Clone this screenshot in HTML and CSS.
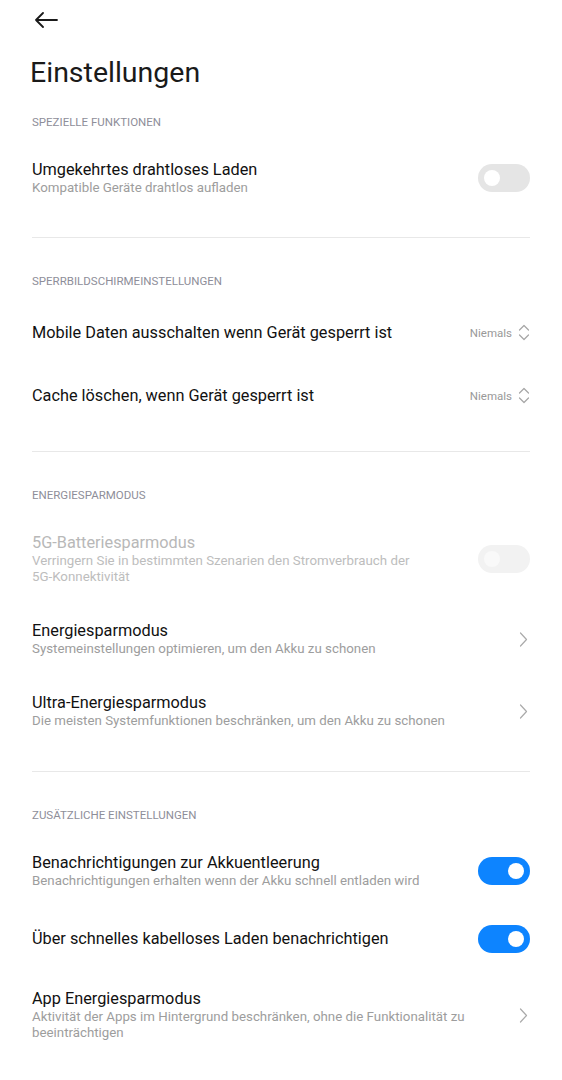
FILE: index.html
```html
<!DOCTYPE html>
<html lang="de">
<head>
    <meta charset="UTF-8">
    <meta name="viewport" content="width=device-width, initial-scale=1.0">
    <title>Einstellungen</title>
    <link rel="stylesheet" href="styles.css">
</head>
<body>
    <div class="topbar">
        <svg class="back" width="24" height="16" viewBox="0 0 24 16">
            <path d="M23 8H2M9 1L2 8l7 7" fill="none" stroke="#1a1a1a" stroke-width="1.8" stroke-linecap="round" stroke-linejoin="round"/>
        </svg>
    </div>
    <h1 class="page-title">Einstellungen</h1>

    <div class="section first">
        <div class="section-head">SPEZIELLE FUNKTIONEN</div>
        <div class="row">
            <div class="text">
                <div class="title">Umgekehrtes drahtloses Laden</div>
                <div class="sub">Kompatible Geräte drahtlos aufladen</div>
            </div>
            <div class="toggle"></div>
        </div>
    </div>
    <div class="divider"></div>

    <div class="section">
        <div class="section-head">SPERRBILDSCHIRMEINSTELLUNGEN</div>
        <div class="row single">
            <div class="text">
                <div class="title">Mobile Daten ausschalten wenn Gerät gesperrt ist</div>
            </div>
            <div class="value">
                Niemals
                <svg width="12" height="17" viewBox="0 0 12 17"><path d="M1.5 6L6 1.5 10.5 6M1.5 11L6 15.5 10.5 11" fill="none" stroke="#a6a6a6" stroke-width="1.2" stroke-linecap="round" stroke-linejoin="round"/></svg>
            </div>
        </div>
        <div class="row single">
            <div class="text">
                <div class="title">Cache löschen, wenn Gerät gesperrt ist</div>
            </div>
            <div class="value">
                Niemals
                <svg width="12" height="17" viewBox="0 0 12 17"><path d="M1.5 6L6 1.5 10.5 6M1.5 11L6 15.5 10.5 11" fill="none" stroke="#a6a6a6" stroke-width="1.2" stroke-linecap="round" stroke-linejoin="round"/></svg>
            </div>
        </div>
    </div>
    <div class="divider"></div>

    <div class="section">
        <div class="section-head">ENERGIESPARMODUS</div>
        <div class="row disabled">
            <div class="text">
                <div class="title">5G-Batteriesparmodus</div>
                <div class="sub">Verringern Sie in bestimmten Szenarien den Stromverbrauch der <span class="nowrap">5G-Konnektivität</span></div>
            </div>
            <div class="toggle"></div>
        </div>
        <div class="row">
            <div class="text">
                <div class="title">Energiesparmodus</div>
                <div class="sub">Systemeinstellungen optimieren, um den Akku zu schonen</div>
            </div>
            <svg class="chevron" width="9" height="15" viewBox="0 0 9 15"><path d="M1.5 1L7.5 7.5 1.5 14" fill="none" stroke="#aaaaaa" stroke-width="1.2" stroke-linecap="round" stroke-linejoin="round"/></svg>
        </div>
        <div class="row">
            <div class="text">
                <div class="title">Ultra-Energiesparmodus</div>
                <div class="sub">Die meisten Systemfunktionen beschränken, um den Akku zu schonen</div>
            </div>
            <svg class="chevron" width="9" height="15" viewBox="0 0 9 15"><path d="M1.5 1L7.5 7.5 1.5 14" fill="none" stroke="#aaaaaa" stroke-width="1.2" stroke-linecap="round" stroke-linejoin="round"/></svg>
        </div>
    </div>
    <div class="divider"></div>

    <div class="section">
        <div class="section-head">ZUSÄTZLICHE EINSTELLUNGEN</div>
        <div class="row">
            <div class="text">
                <div class="title">Benachrichtigungen zur Akkuentleerung</div>
                <div class="sub">Benachrichtigungen erhalten wenn der Akku schnell entladen wird</div>
            </div>
            <div class="toggle on"></div>
        </div>
        <div class="row single">
            <div class="text">
                <div class="title">Über schnelles kabelloses Laden benachrichtigen</div>
            </div>
            <div class="toggle on"></div>
        </div>
        <div class="row">
            <div class="text">
                <div class="title">App Energiesparmodus</div>
                <div class="sub">Aktivität der Apps im Hintergrund beschränken, ohne die Funktionalität zu beeinträchtigen</div>
            </div>
            <svg class="chevron" width="9" height="15" viewBox="0 0 9 15"><path d="M1.5 1L7.5 7.5 1.5 14" fill="none" stroke="#aaaaaa" stroke-width="1.2" stroke-linecap="round" stroke-linejoin="round"/></svg>
        </div>
    </div>
</body>
</html>
```

FILE: styles.css
```css
body {
    margin: 0;
    font-family: Roboto, "Noto Sans", sans-serif;
    background-color: #fff;
    color: #111;
}
.topbar {
    height: 39px;
    display: flex;
    align-items: center;
    padding-left: 34px;
}
.back {
    display: block;
}
.page-title {
    margin: 16px 0 0 30px;
    font-size: 28.5px;
    line-height: 36px;
    font-weight: 400;
    color: #1a1a1a;
}
.section {
    padding: 0 32px 24px;
}
.section.first {
    padding-bottom: 23px;
}
.section-head {
    padding: 35px 0 12px;
    font-size: 11.5px;
    line-height: 16px;
    color: #8e8e99;
}
.section.first .section-head {
    padding-top: 23px;
}
.divider {
    height: 1px;
    margin: 0 32px;
    background-color: #e8e8e8;
}
.row {
    display: flex;
    align-items: center;
    gap: 20px;
    padding: 18px 0;
}
.row.single {
    min-height: 27px;
}
.text {
    flex: 1;
}
.title {
    font-size: 16.3px;
    line-height: 20px;
    color: #111;
}
.sub {
    font-size: 13.3px;
    line-height: 16px;
    color: #9d9d9d;
}
.nowrap {
    white-space: nowrap;
}
.row.disabled .title {
    color: #b8b8b8;
}
.row.disabled .sub {
    color: #bdbdbd;
}
.toggle {
    position: relative;
    flex: none;
    width: 52px;
    height: 28px;
    border-radius: 14px;
    background-color: #e5e5e5;
}
.toggle::after {
    content: "";
    position: absolute;
    top: 6px;
    left: 6px;
    width: 16px;
    height: 16px;
    border-radius: 50%;
    background-color: #fff;
}
.toggle.on {
    background-color: #0d84ff;
}
.toggle.on::after {
    left: 30px;
}
.row.disabled .toggle {
    background-color: #f2f2f2;
}
.row.disabled .toggle::after {
    background-color: #f9f9f9;
}
.value {
    display: flex;
    align-items: center;
    gap: 6px;
    font-size: 11.5px;
    color: #999;
}
.value svg {
    display: block;
}
.chevron {
    flex: none;
    margin-right: 2px;
}
```
